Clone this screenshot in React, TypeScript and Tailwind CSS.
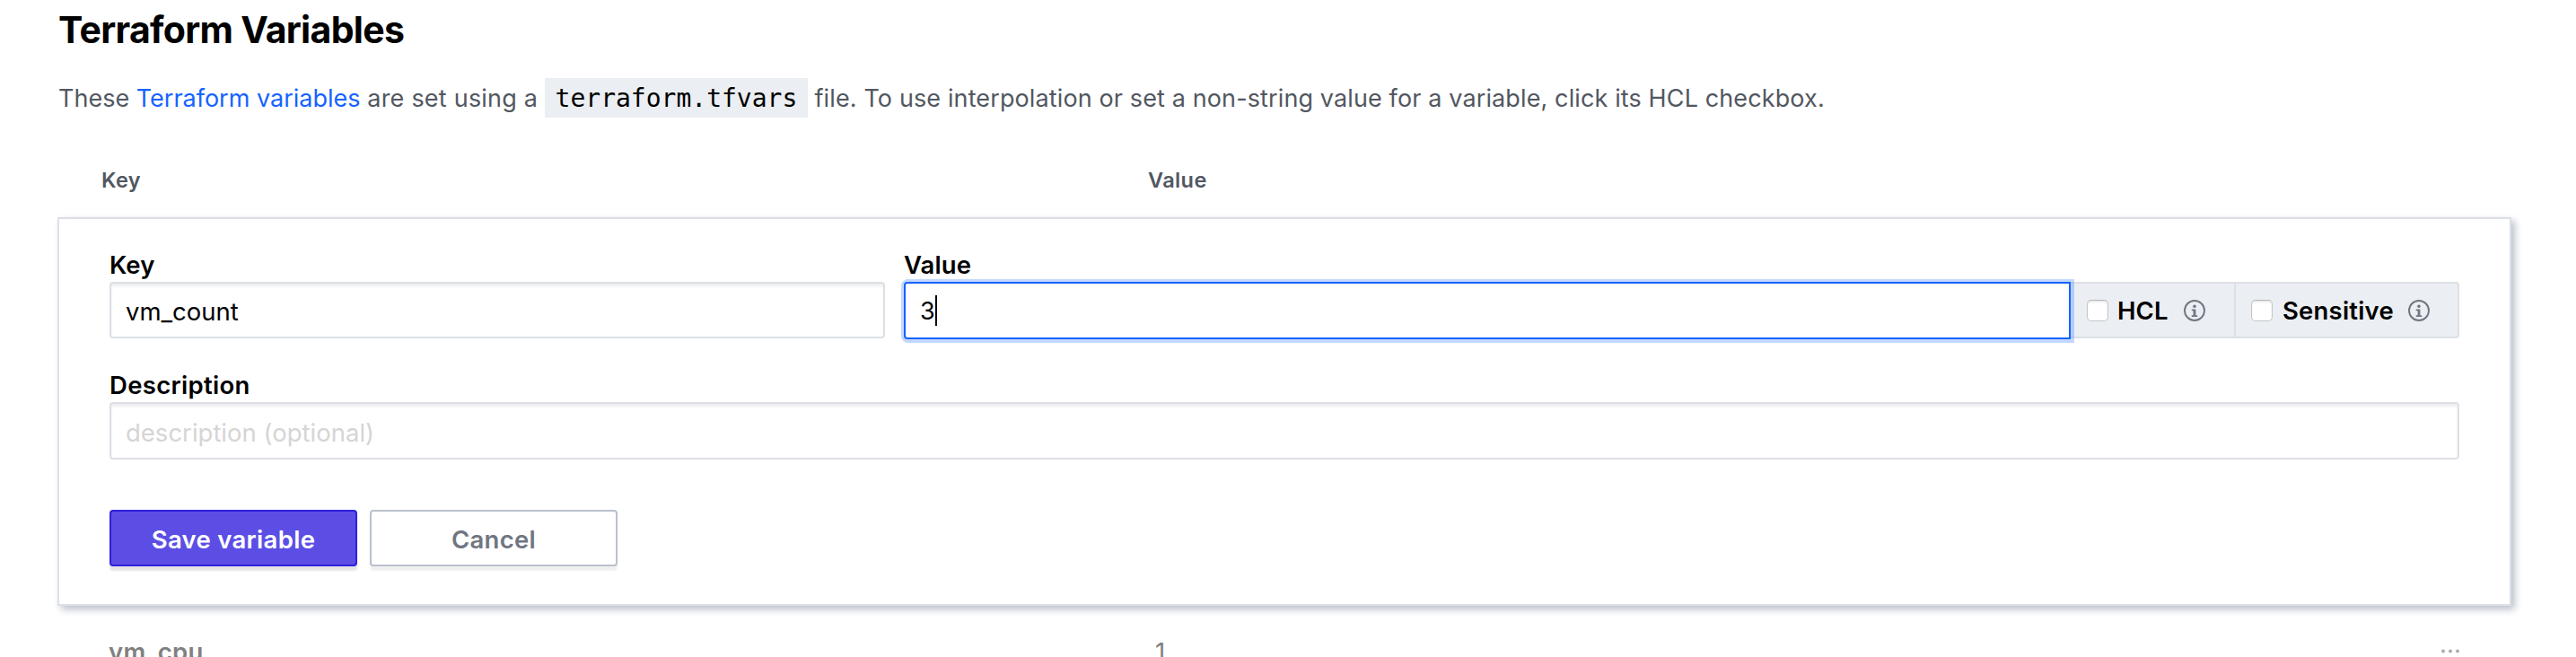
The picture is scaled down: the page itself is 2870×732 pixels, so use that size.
import React from "react";

function InfoIcon() {
  return (
    <svg width="24" height="24" viewBox="0 0 24 24" fill="none" className="shrink-0 text-[#6f7682]">
      <circle cx="12" cy="12" r="11" stroke="currentColor" strokeWidth="1.9" />
      <circle cx="12" cy="7.2" r="1.8" fill="currentColor" />
      <path d="M8.8 10.5h4.6v6.7h1.8v1.7H8.8v-1.7h1.8v-5H8.8z" fill="currentColor" />
    </svg>
  );
}

function Checkbox() {
  return (
    <span className="mt-px h-6 w-6 shrink-0 rounded-[5px] border border-[#c4c5c8] border-t-[#b4b5b8] bg-white shadow-[inset_0_2px_2px_rgba(0,0,0,0.08)]" />
  );
}

const label = "block h-10 whitespace-nowrap pt-px text-[27.5px] leading-10 font-semibold tracking-[0.1px] text-black";
const input =
  "block w-full rounded-[4px] border-2 border-[#dce0e6] bg-white px-4 pt-[3px] text-[27.5px] text-black shadow-[inset_0_3px_3px_rgba(0,0,0,0.07)] outline-none placeholder:text-[#d5d5d5]";

export default function App() {
  return (
    <main className="h-[732px] w-[2870px] overflow-hidden bg-white font-['Inter','Liberation_Sans',sans-serif]">
      <h1 className="h-[66px] pl-[65px] text-[41px] leading-[66px] font-bold tracking-[-0.7px] text-black">Terraform Variables</h1>
      <p className="mt-[21px] flex h-11 whitespace-pre pl-[65px] text-[27px] leading-[46px] text-[#525761]">
        <span>These </span>
        <a className="text-[#1563ff]">Terraform variables</a>
        <span className="tracking-[0.22px]"> are set using a </span>
        <code className="h-11 bg-[#ebeef2] px-[11.5px] font-['DejaVu_Sans_Mono',monospace] text-[28px] leading-[45px] text-black">terraform.tfvars</code>
        <span className="tracking-[0.12px]"> file. To use interpolation or set a non-string value for a variable, click its HCL checkbox.</span>
      </p>
      <div className="mt-[55px] flex h-[29px] pl-[113px] text-[23.5px] leading-[29px] font-semibold tracking-[0.4px] text-[#525761]">
        <span className="w-[1166px]">Key</span>
        <span>Value</span>
      </div>
      <form className="mt-[27px] ml-16 h-[433px] w-[2734px] border-2 border-[#dce0e6] bg-white px-14 pt-[30px] shadow-[4px_4px_8px_#bac1cc]">
        <div className="flex">
          <div className="w-[864px]">
            <label className={label}>Key</label>
            <input className={input + " h-[63px]"} defaultValue="vm_count" />
          </div>
          <div className="ml-[21px] w-[1733px]">
            <label className={label}>Value</label>
            <div className="flex h-16">
              <div className="relative z-10 flex h-16 w-[1300px] items-center rounded-l-[4px] border-2 border-[#1563ff] bg-white pl-4 shadow-[0.5px_0.5px_0_3.5px_rgba(21,99,255,0.25)]">
                <span className="pt-[2px] text-[27px] leading-10">3</span>
                <span className="h-[34px] w-0.5 bg-black" />
              </div>
              <div className="flex h-[63px] w-[433px] rounded-r-[4px] border-2 border-l-0 border-[#dce0e6] bg-[#ebeef2] text-[27.5px] font-semibold text-black">
                <div className="flex w-[184px] items-center border-r-2 border-[#dce0e6] pl-[18px]">
                  <Checkbox />
                  <span className="mt-[3px] ml-[10px] w-[74px] tracking-[0.1px]">HCL</span>
                  <InfoIcon />
                </div>
                <div className="flex items-center pl-[17px]">
                  <Checkbox />
                  <span className="mt-[3px] ml-[11px] w-[140px] tracking-[0.2px]">Sensitive</span>
                  <InfoIcon />
                </div>
              </div>
            </div>
          </div>
        </div>
        <label className={label + " mt-[30px] tracking-[0.3px]"}>Description</label>
        <input className={input + " h-16"} placeholder="description (optional)" />
        <div className="mt-14 flex gap-[14px] text-[27.5px] font-semibold tracking-[0.3px]">
          <button type="button" className="h-[63px] w-[276px] rounded-[4px] border-2 border-[#2e20de] bg-[#5c4ee5] pt-1 text-white shadow-[0_5px_2px_rgba(0,0,0,0.1)]">
            Save variable
          </button>
          <button type="button" className="h-[63px] w-[276px] rounded-[4px] border-2 border-[#bac1cc] bg-white pt-1 text-[#6f7682] shadow-[0_5px_2px_rgba(0,0,0,0.06)]">
            Cancel
          </button>
        </div>
      </form>
      <div className="mt-[31px] flex h-[26px] overflow-hidden pl-[121px] text-[27.5px] leading-10 text-[#808080]">
        <span className="w-[1166px] font-semibold tracking-[0.3px]">vm_cpu</span>
        <span className="w-[1433px]">1</span>
        <svg width="20" height="5" viewBox="0 0 20 5" className="mt-[17px]" fill="#a9abb0">
          <circle cx="2" cy="2.5" r="1.9" />
          <circle cx="10" cy="2.5" r="1.9" />
          <circle cx="18" cy="2.5" r="1.9" />
        </svg>
      </div>
    </main>
  );
}
